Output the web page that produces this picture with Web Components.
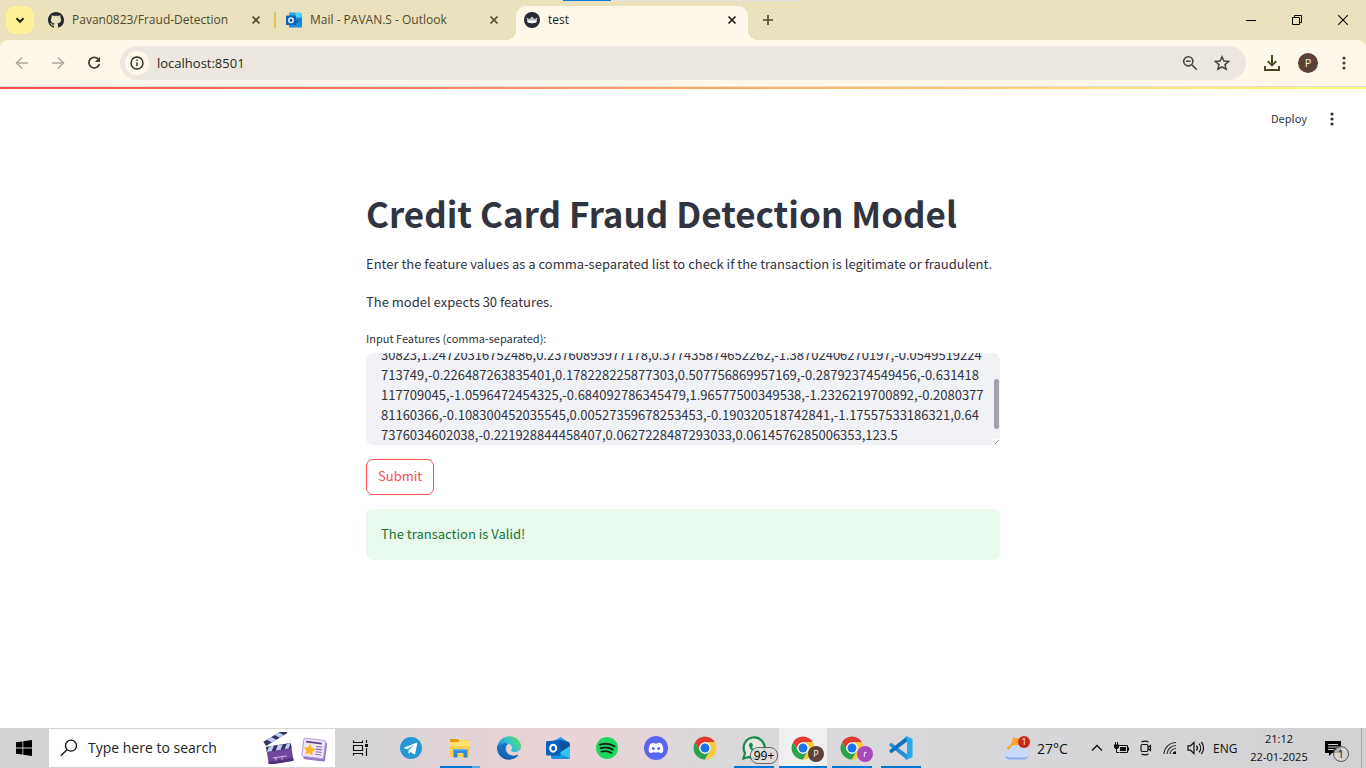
<!DOCTYPE html>
<html lang="en">
<head>
<meta charset="utf-8">
<title>test</title>
<style>
  body { margin: 0; font-family: "Open Sans", "Noto Sans", sans-serif; font-size: 12px; }
</style>
</head>
<body>
<desktop-screen></desktop-screen>
<script>
const CHROME = `<path fill="#e33b2e" d="M4.95 13A22 22 0 0 1 43.05 13H24A11 11 0 0 0 14.47 29.5Z"/><path fill="#2ba24c" d="M4.95 13 14.47 29.5A11 11 0 0 0 33.53 29.5L24 46A22 22 0 0 1 4.95 13Z"/><path fill="#fcc934" d="M43.05 13A22 22 0 0 1 24 46L33.53 29.5A11 11 0 0 0 24 13Z"/><circle cx="24" cy="24" r="11" fill="#fff"/><circle cx="24" cy="24" r="8.6" fill="#1a73e8"/>`;
const OUTLOOK = `<path fill="#0a5fb4" d="M6 4h25v26H6z"/><path fill="#28a8ea" d="M6 1h13v9H6z"/><path fill="#50d9ff" d="M19 1h12v9H19z"/><path fill="#0078d4" d="M6 10h13v9H6z"/><path fill="#28a8ea" d="M19 10h12v9H19z"/><path fill="#1490df" d="M32 14v15a2 2 0 0 1-2 2H6V20l14 2z"/><path fill="#0a4a8f" d="M18 17l4 5 9-5v-4H18z" opacity=".45"/><rect x="0" y="7" width="20" height="19" rx="2" fill="#0a62be"/><ellipse cx="10" cy="16.500" rx="4.400" ry="4.800" fill="none" stroke="#fff" stroke-width="2.800"/>`;
const ICONS = {
  chevron: ['0 0 12 12', `<path d="M2.500 4.300 6 7.800 9.500 4.300" fill="none" stroke="#1f1c0c" stroke-width="2"/>`],
  github: ['0 0 16 16', `<path fill="#24292f" d="M8 0C3.580 0 0 3.580 0 8c0 3.540 2.290 6.530 5.470 7.590.4.070.55-.170.55-.380 0-.190-.010-.820-.010-1.490-2.010.370-2.530-.490-2.690-.940-.090-.230-.480-.940-.820-1.130-.280-.150-.680-.520-.010-.530.630-.010 1.080.580 1.230.820.720 1.210 1.870.870 2.330.660.070-.520.280-.870.510-1.070-1.780-.200-3.640-.890-3.640-3.950 0-.870.310-1.590.820-2.150-.080-.200-.360-1.020.080-2.120 0 0 .670-.210 2.200.820.640-.180 1.320-.270 2-.270s1.360.090 2 .270c1.530-1.040 2.200-.820 2.200-.820.440 1.100.160 1.920.080 2.120.510.560.820 1.270.820 2.150 0 3.070-1.870 3.750-3.650 3.950.290.250.540.730.540 1.480 0 1.070-.010 1.930-.010 2.200 0 .210.150.460.550.380A8 8 0 0 0 16 8c0-4.420-3.580-8-8-8z"/>`],
  outlook: ['0 0 32 32', OUTLOOK],
  crown: ['0 0 16 16', `<circle cx="8" cy="8" r="8" fill="#262730"/><path d="M2.300 5.400 5.300 7.100 8 4.500l2.700 2.600 3-1.700-1.300 4.800Q8 12.200 3.600 10.200z" fill="#b9babd"/><path d="M3.300 8.500h9.400l-.4 1.800Q8 12.200 3.700 10.300z" fill="#fff"/>`],
  close: ['0 0 10 10', `<path d="M1.500 1.500l7 7M8.500 1.500l-7 7" stroke="currentColor" stroke-width="1.700" fill="none"/>`],
  plus: ['0 0 12 12', `<path d="M6 1v10M1 6h10" stroke="#4c462a" stroke-width="1.600"/>`],
  min: ['0 0 10 10', `<path d="M0 5.500h10" stroke="#000"/>`],
  restore: ['0 0 10 10', `<path d="M.5 2.500h7v7h-7zM2.500 2.500v-2h7v7h-2" fill="none" stroke="#000"/>`],
  winclose: ['0 0 10 10', `<path d="M.3.3l9.400 9.400M9.700.3.3 9.700" stroke="#000" stroke-width="1.100"/>`],
  back: ['0 0 14 14', `<path d="M13 7H2M7 1.500 1.500 7 7 12.500" fill="none" stroke="#b0ab98" stroke-width="1.600"/>`],
  forward: ['0 0 14 14', `<path d="M1 7h11M7 1.500 12.500 7 7 12.500" fill="none" stroke="#b0ab98" stroke-width="1.600"/>`],
  reload: ['0 0 14 14', `<path d="M11.600 3.700A5.300 5.300 0 1 0 12.300 8" fill="none" stroke="#48432c" stroke-width="1.800"/><path d="M13 .800V6H7.800z" fill="#48432c"/>`],
  info: ['0 0 14 14', `<circle cx="7" cy="7" r="6" fill="none" stroke="#2d2a20" stroke-width="1.400"/><path d="M7 6.200v4M7 3.500v1.500" stroke="#2d2a20" stroke-width="1.400"/>`],
  zoomout: ['0 0 16 16', `<circle cx="6.300" cy="6.300" r="4.600" fill="none" stroke="#48443a" stroke-width="1.600"/><path d="M9.800 9.800l5 5M4 6.300h4.600" stroke="#48443a" stroke-width="1.600"/>`],
  star: ['0 0 16 16', `<path d="M8 1.800l1.900 4.300 4.700.4-3.600 3.100 1.100 4.600L8 11.800l-4.100 2.400L5 9.600 1.400 6.500l4.700-.4z" fill="none" stroke="#48443a" stroke-width="1.500"/>`],
  download: ['0 0 16 16', `<path d="M8 0v10M3.700 6.200 8 10.500l4.300-4.300M1 11v4h14v-4" fill="none" stroke="#4a4423" stroke-width="1.900"/>`],
  dots: ['0 0 4 14', `<circle cx="2" cy="2" r="1.600" fill="currentColor"/><circle cx="2" cy="7" r="1.600" fill="currentColor"/><circle cx="2" cy="12" r="1.600" fill="currentColor"/>`],
  windows: ['0 0 16 16', `<path d="M0 2.300 6.500 1.400v6.200H0zM7.300 1.300 16 0v7.600H7.300zM0 8.400h6.500v6.200L0 13.700zM7.300 8.400H16V16l-8.700-1.300z"/>`],
  search: ['0 0 18 18', `<circle cx="11" cy="6.700" r="5.500" fill="none" stroke="#111" stroke-width="1.300"/><path d="M7 10.700.8 16.700" stroke="#111" stroke-width="1.300"/>`],
  clapper: ['0 0 32 32', `<g transform="rotate(-9 16 20)"><rect x="4" y="13" width="25" height="18" rx="1" fill="#6c489c"/><path d="M4 28h25v3H4z" fill="#51327e"/><path d="M4 13h25v5H4z" fill="#3a2e62"/><path d="M7 13h5l-3 5H4zM16 13h5l-3 5h-5zM25 13h4l-3 5h-4z" fill="#bccdf5"/><path d="M9 25h14M12 25v3M18 25v3" stroke="#d9a7ea" stroke-width="1.100"/></g><g transform="rotate(-31 3 14)"><rect x="3" y="9" width="25" height="5" fill="#3d3065"/><path d="M7 9h5l3 5h-5zM16 9h5l3 5h-5z" fill="#bccdf5"/></g>`],
  news: ['0 -2 32 32', `<g transform="rotate(7 16 16)"><rect x="5" y="6" width="25" height="22" rx="2" fill="#9a78bf"/><rect x="3" y="4" width="25" height="21" rx="2" fill="#ede6f8" stroke="#b395d5"/><path d="M6 8h18" stroke="#60458a" stroke-width="2"/><path d="M18 12h7M18 15h7M18 18h7M18 21h7" stroke="#8a6cb1" stroke-width="1.300"/><path d="M11 10l2.200 4.200 4.600.7-3.300 3.200.8 4.600-4.300-2.200-4.200 2.200.8-4.600-3.300-3.200 4.600-.7z" fill="#ffb51f"/></g>`],
  taskview: ['0 -2 20 20', `<path d="M1.500.5v2h9v-2M1.500 15.500v-2h9v2M1.500 5.500h9v5h-9zM14.500 0v3M14.500 8v8" fill="none" stroke="#111" stroke-width="1.200"/><path d="M13 4h3v3h-3z" fill="#111"/>`],
  telegram: ['0 0 24 24', `<circle cx="12" cy="12" r="11" fill="#2499d3"/><path d="M4.700 11.800 17.300 6.800c.6-.2 1.100.2.900 1l-2 10c-.1.700-.6.900-1.200.5l-3.300-2.400-1.700 1.600c-.2.200-.6.200-.6-.3L9.700 14l5.900-5.300-7.300 4.500-3.400-1.100z" fill="#fff"/>`],
  folder: ['0 0 24 24', `<path fill="#ffcf4d" d="M2 4h20v17H2z"/><path fill="#dfa000" d="M2 3h8l1.500 1.500L10 6H2z"/><path fill="#ffe073" d="M2 6.500h8.500L12 5h10v5H2z"/><path fill="#3289d8" d="M5.500 13h14v8.500h-4V17h-6v4.500h-4z"/><path fill="#5bb2ef" d="M5.500 13h14v1.500h-14z"/>`],
  edge: ['0 0 24 24', `<defs><linearGradient id="a" x1="0" y1=".7" x2="1" y2=".2"><stop offset="0" stop-color="#1689d8"/><stop offset=".5" stop-color="#31c2d7"/><stop offset="1" stop-color="#65dc50"/></linearGradient><linearGradient id="b" x1="0" y1="0" x2=".8" y2="1"><stop offset="0" stop-color="#1b82d3"/><stop offset="1" stop-color="#0c468f"/></linearGradient></defs><path fill="url(#b)" d="M0 11C1 6 7 5 12 8c-4 0-5 4-3 8s8 5 12.500 2.600C18 24.500 10 25 5 21.500 1 18.500 0 15 0 11z"/><path fill="url(#a)" d="M.3 10.500C1.500 4 7 .2 12.500.2 19 .2 24 5 24 10c0 4-3 6-6.500 6-2.500 0-4-.9-3.200-2.100 1.700-2.200.5-5.900-4.300-6.300C6.500 6.800 2.500 8 .3 10.500z"/><path fill="#176fc1" d="M6 10c-3 6 1 13 8 13 3.500 0 6-1.800 7.500-4.300C15 21.500 9 18 9 13c0-2 .5-4 2-5-2-.2-4 .5-5 2z" opacity=".8"/>`],
  outlooknew: ['0 0 26 26', `<path fill="#1c9be8" d="M7 7l8.500-5L24 7.500V12H7z"/><path fill="#0b4f9d" d="M5 6l11-1 8.500 2.500L16 16H5z"/><path fill="#35c3f3" d="M25 9v13.500a1.500 1.500 0 0 1-1.500 1.500H8l-2-3z"/><path fill="#0f4f9e" d="M14 14l10.500-6.500L25 11l-11 7z"/><path fill="#1b8fe0" d="M6 19h9l10 4.300-1.500.7H8a2 2 0 0 1-2-2z"/><rect x="1" y="6" width="14.500" height="14.500" rx="1.500" fill="#0861ba"/><ellipse cx="8.200" cy="13.200" rx="3" ry="3.500" fill="none" stroke="#fff" stroke-width="2"/>`],
  spotify: ['0 0 24 24', `<circle cx="12" cy="12" r="11" fill="#1ed760"/><path d="M5 8.600c5-1.400 10.400-.8 14.500 1.600M5.700 12.200c4.300-1.200 8.700-.6 12.200 1.400M6.500 15.600c3.500-.9 7-.5 10 1.200" stroke="#102417" stroke-width="1.900" stroke-linecap="round" fill="none"/>`],
  discord: ['0 0 24 24', `<circle cx="12" cy="12" r="12" fill="#5865f2"/><path fill="#fff" d="M8.500 7.200l1-.6.7 1a9 9 0 0 1 3.600 0l.7-1c1.200.2 2.200.6 3 1.100 1.500 2.300 2 5 1.800 8-1 .9-2.100 1.400-3.200 1.600l-.9-1.400a8 8 0 0 1-6.400 0l-.9 1.400c-1.100-.2-2.200-.7-3.200-1.600-.2-3 .3-5.700 1.800-8z"/><circle cx="9.300" cy="12.500" r="1.500" fill="#5865f2"/><circle cx="14.700" cy="12.500" r="1.500" fill="#5865f2"/>`],
  chrome: ['1 1 46 46', CHROME],
  whatsapp: ['0 0 24 24', `<path d="M1.500 22.500 3 17A10.500 10.500 0 1 1 7 21z" fill="#e4eae3" stroke="#178a4c" stroke-width="2.200"/><path d="M8.500 6.500c-2.500 1.800-1.500 5 .8 7.500 2.700 2.900 5.500 4 7.500 2.500 1-.9 1-2 .8-2.300l-2.500-1.300-1.400 1.500c-1.800-.7-3-2-3.700-3.500l1-1.300-1-2.500z" fill="#178a4c"/>`],
  vscode: ['0 0 24 24', `<path fill="#1f8fd6" d="M.5 8.300 2.300 6.800 18 18.500v5.200L.5 9.800z"/><path fill="#0b73bd" d="M.5 15.700l1.800 1.500L18 5.500V.3L.5 14.200z"/><path fill="#29a7ec" d="M17.500.2 23.500 3v18l-6 2.800c-.5.200-.8 0-1-.4L18 18V6L16.500.600z"/>`],
  weather: ['0 0 26 26', `<path d="M2.500 13Q8.500 10 9 2q5 2 8 1v9L6 16z" fill="#f7a428"/><path d="M6 24.500a5 5 0 0 1-.5-10A7 7 0 0 1 18 13a5.800 5.800 0 0 1 1.500 11.500z" fill="#c6dbfb"/><path d="M1.300 20.500C3 22 4.500 22.500 6 22.500h13.500c2.500 0 4-.5 5.300-2.500-.6 2.700-2.800 4.500-5.300 4.500H6c-2.200 0-4.200-1.500-4.700-4z" fill="#85aaf0"/>`],
  up: ['0 0 12 12', `<path d="M1 8.500 6 3.500l5 5" fill="none" stroke="#111" stroke-width="1.300"/>`],
  battery: ['0 0 16 12', `<path d="M5.500 3.500h9v7h-8M14.500 5.500h1v3h-1" fill="none" stroke="#111"/><path d="M7 5h6v4H7zM1 2.500h5v3L4.500 7h-2L1 5.500zM2 0h1v3H2zM4 0h1v3H4z" fill="#111"/><path d="M3.500 7v3.500H6" fill="none" stroke="#111"/>`],
  meet: ['0 0 14 16', `<rect x="2" y="4.500" width="7" height="7" rx="1.500" fill="none" stroke="#111" stroke-width="1.200"/><path d="M9 7.300l2.500-1.600v4.600L9 8.700M2.500 2Q6 .200 9.500 2M2.500 14Q6 15.800 9.500 14" fill="none" stroke="#111" stroke-width="1.200"/>`],
  wifi: ['0 0 14 14', `<path d="M1 13A12 12 0 0 1 13 1.500M4 13A9 9 0 0 1 13 4.500M7 13a6 6 0 0 1 6-5.500" fill="none" stroke="#333" stroke-width="1.200"/><path d="M9.500 13A3.500 3.500 0 0 1 13 10.200V13z" fill="#111"/>`],
  volume: ['0 0 18 14', `<path d="M1 4.800h2.500L7 1.500v11L3.500 9.200H1zM9.500 4.500a4 4 0 0 1 0 5M12 2.700a6.500 6.500 0 0 1 0 8.600M14.300 1a9 9 0 0 1 0 12" fill="none" stroke="#111" stroke-width="1.200"/>`],
  notice: ['0 0 16 16', `<path d="M0 1h16v12H7l-3 3v-3H0z" fill="#000"/><path d="M3 4.500h10M3 7h10M3 9.500h6" stroke="#d5d5d5"/>`]
};

class Base extends HTMLElement {
  constructor() { super(); this.attachShadow({ mode: 'open' }); }
  connectedCallback() { this.shadowRoot.innerHTML = this.render(); this.ready?.(); }
  attr(n, d = '') { return this.getAttribute(n) ?? d; }
}
const icon = (name, w, h = w) => `<ui-icon name="${name}" w="${w}" h="${h}"></ui-icon>`;

customElements.define('ui-icon', class extends Base {
  render() {
    const [box, body] = ICONS[this.attr('name')];
    return `<style>:host{display:block;flex:none}svg{display:block}</style>
      <svg width="${this.attr('w')}" height="${this.attr('h')}" viewBox="${box}" aria-hidden="true">${body}</svg>`;
  }
});

customElements.define('icon-button', class extends Base {
  render() {
    return `<style>
      :host{display:block;flex:none}
      button{all:unset;box-sizing:border-box;width:100%;height:100%;display:flex;align-items:center;justify-content:center}
    </style><button type="button" aria-label="${this.attr('label')}"><slot></slot></button>`;
  }
});

customElements.define('browser-tab', class extends Base {
  render() {
    return `<style>
      :host{display:flex;align-items:center;gap:8px;box-sizing:border-box;flex:0 1 232px;min-width:0;height:28px;padding:0 11px 0 8px;color:#4f4a31;position:relative}
      .name{flex:1;min-width:0;overflow:hidden;white-space:nowrap;line-height:20px}
      icon-button{width:10px;height:16px}
      :host([divided])::after{content:"";position:absolute;right:-4px;top:6px;width:2px;height:16px;background:#d8c762}
      :host([active]){background:#fff8ea;color:#24200f;height:34px;padding-bottom:6px;border-radius:10px 10px 0 0}
      .foot{display:none}
      :host([active]) .foot{display:block;position:absolute;bottom:0;width:10px;height:10px}
      .l{left:-10px;background:radial-gradient(circle at 0 0,transparent 10px,#fff8ea 10px)}
      .r{right:-10px;background:radial-gradient(circle at 100% 0,transparent 10px,#fff8ea 10px)}
    </style>
    <span class="foot l"></span>${icon(this.attr('icon'), 16)}<span class="name"><slot></slot></span>
    <icon-button label="Close tab">${icon('close', 10)}</icon-button><span class="foot r"></span>`;
  }
});

customElements.define('tab-strip', class extends Base {
  render() {
    return `<style>
      :host{display:flex;align-items:flex-start;height:34px;padding-top:6px;background:#eae2bc;position:relative}
      .menu{width:28px;height:28px;margin:0 6px;background:#fff197;border-radius:9px}
      nav{display:flex;gap:6px;flex:0 1 708px;min-width:0}
      .new{width:28px;height:28px;margin-left:6px}
      .controls{display:flex;margin-left:auto}
      .controls icon-button{width:46px;height:28px}
      .peek{position:absolute;top:0;left:563px;width:241px;height:1px;background:linear-gradient(90deg,#0a7bd8 48px,#e2e2e2 48px)}
    </style>
    <span class="peek"></span>
    <icon-button class="menu" label="Search tabs">${icon('chevron', 12)}</icon-button>
    <nav>
      <browser-tab icon="github" divided>Pavan0823/Fraud-Detection</browser-tab>
      <browser-tab icon="outlook">Mail - PAVAN.S - Outlook</browser-tab>
      <browser-tab icon="crown" active>test</browser-tab>
    </nav>
    <icon-button class="new" label="New tab">${icon('plus', 12)}</icon-button>
    <div class="controls">
      <icon-button label="Minimize">${icon('min', 10)}</icon-button>
      <icon-button label="Restore">${icon('restore', 10)}</icon-button>
      <icon-button label="Close">${icon('winclose', 10)}</icon-button>
    </div>`;
  }
});

customElements.define('address-bar', class extends Base {
  render() {
    return `<style>
      :host{display:block;background:#eae2bc}
      .bar{display:flex;align-items:center;height:46px;padding:0 4px;background:#fff8ea;border-bottom:1px solid #dfdedb;border-radius:8px 8px 0 0;color:#4a4423}
      icon-button{width:36px;height:34px}
      .box{display:flex;align-items:center;flex:1;height:34px;margin:0 8px;padding:0 8px 0 5px;background:#ece7e0;border-radius:17px}
      .box icon-button{width:32px}
      .box .info{width:24px;height:24px;border-radius:12px;background:#fff8ea}
      input{all:unset;flex:1;min-width:0;margin-left:8px;font-size:13px;line-height:20px;color:#2b281f}
      .who{width:20px;height:20px;border-radius:10px;background:#5d4037;color:#f3e9e5;font-size:11px;line-height:20px;text-align:center}
    </style>
    <div class="bar">
      <icon-button label="Back">${icon('back', 14)}</icon-button>
      <icon-button label="Forward">${icon('forward', 14)}</icon-button>
      <icon-button label="Reload">${icon('reload', 14)}</icon-button>
      <div class="box">
        <icon-button class="info" label="Site information">${icon('info', 14)}</icon-button>
        <input aria-label="Address" value="localhost:8501">
        <icon-button label="Zoom">${icon('zoomout', 16)}</icon-button>
        <icon-button label="Bookmark">${icon('star', 16)}</icon-button>
      </div>
      <icon-button label="Downloads">${icon('download', 16)}</icon-button>
      <icon-button label="Profile"><span class="who">P</span></icon-button>
      <icon-button label="Menu">${icon('dots', 4, 14)}</icon-button>
    </div>`;
  }
});

customElements.define('feature-form', class extends Base {
  render() {
    return `<style>
      :host{display:block}
      label{display:block;font-size:11px;line-height:20px;margin-bottom:5px}
      .area{position:relative;border-radius:7px;overflow:hidden;background:#f0f2f6}
      textarea{display:block;box-sizing:border-box;width:100%;height:92px;margin:0;padding:14px 15px;border:0;outline:0;background:none;resize:none;overflow:auto;scrollbar-width:none;font:inherit;color:inherit;line-height:20px;white-space:pre}
      .thumb{position:absolute;right:1px;top:26px;width:5px;height:50px;border-radius:3px;background:#a3a4ab}
      .grip{position:absolute;right:1px;bottom:1px;width:5px;height:5px;background:linear-gradient(135deg,#fff 50%,#8b8b90 50%,#8b8b90 65%,#fff 65%)}
      .submit{display:block;margin-top:14px;height:36px;padding:0 11px 2px;border:1px solid #ff4b4b;border-radius:7px;background:#fff;color:#ff4b4b;font:inherit;line-height:20px}
    </style>
    <form onsubmit="return false">
      <label for="f">Input Features (comma-separated):</label>
      <div class="area">
        <textarea id="f" spellcheck="false">1,-0.966271711572087,-0.185226008082898,1.79299333957872,-0.863291275036453,-0.01030887960
30823,1.24720316752486,0.23760893977178,0.377435874652262,-1.38702406270197,-0.0549519224
713749,-0.226487263835401,0.178228225877303,0.507756869957169,-0.28792374549456,-0.631418
117709045,-1.0596472454325,-0.684092786345479,1.96577500349538,-1.2326219700892,-0.2080377
81160366,-0.108300452035545,0.00527359678253453,-0.190320518742841,-1.17557533186321,0.64
7376034602038,-0.221928844458407,0.0627228487293033,0.0614576285006353,123.5</textarea>
        <span class="thumb"></span><span class="grip"></span>
      </div>
      <button class="submit" type="submit">Submit</button>
    </form>`;
  }
  ready() { this.shadowRoot.querySelector('textarea').scrollTop = 42; }
});

customElements.define('status-alert', class extends Base {
  render() {
    return `<style>:host{display:block;padding:14px 15px 16px;background:#e8f9ee;color:#177233;border-radius:7px;line-height:21px}</style><slot></slot>`;
  }
});

customElements.define('app-page', class extends Base {
  render() {
    return `<style>
      :host{display:block;flex:1;background:#fff;color:#31333f;font-family:"Noto Sans CJK SC","Noto Sans",sans-serif;font-size:13px;line-height:23px}
      .accent{height:2px;background:linear-gradient(90deg,#ff4b4b,#ffa465 50%,#fffd80)}
      header{display:flex;justify-content:flex-end;align-items:center;height:60px;padding-right:16px}
      .deploy{all:unset;font-size:11px;line-height:20px;padding-bottom:2px}
      header icon-button{width:36px;height:28px;margin-left:7px}
      main{box-sizing:border-box;max-width:662px;margin:0 auto;padding:40px 14px}
      h1{margin:0;font-size:35px;line-height:48px;font-weight:700}
      p{margin:0 0 15px}
      h1+p{margin-top:15px}
      feature-form{margin-top:14px}
      status-alert{margin-top:14px}
    </style>
    <div class="accent"></div>
    <header><button class="deploy" type="button">Deploy</button><icon-button label="Menu">${icon('dots', 4, 14)}</icon-button></header>
    <main>
      <h1>Credit Card Fraud Detection Model</h1>
      <p>Enter the feature values as a comma-separated list to check if the transaction is legitimate or fraudulent.</p>
      <p>The model expects 30 features.</p>
      <feature-form></feature-form>
      <status-alert role="status">The transaction is Valid!</status-alert>
    </main>`;
  }
});

customElements.define('task-button', class extends Base {
  render() {
    return `<style>
      :host{display:block;position:relative;width:48px;height:40px;flex:none}
      button{all:unset;width:100%;height:100%;display:flex;align-items:center;justify-content:center}
      :host([open])::after{content:"";position:absolute;left:4px;right:4px;bottom:0;height:2px;background:#0078d7}
      :host([more])::after{background:linear-gradient(90deg,#0078d7 32px,#5ba6e0 32px)}
      :host([focused]){background:#f0efef}
      :host([focused])::after{left:0;right:0}
      .badge{position:absolute;right:3px;bottom:6px;width:16px;height:16px;border-radius:8px;font-size:9px;line-height:16px;text-align:center;color:#fff;background:var(--badge,none)}
      .pill{right:0;bottom:4px;width:26px;height:15px;line-height:15px;border:1px solid #666;color:#000;font-size:12px;font-weight:500;background:#dededecc}
    </style>
    <button type="button" aria-label="${this.attr('label')}">${icon(this.attr('icon'), +this.attr('size', 24))}</button>
    ${this.hasAttribute('badge') ? `<span class="badge ${this.attr('kind')}">${this.attr('badge')}</span>` : ''}`;
  }
});

customElements.define('task-bar', class extends Base {
  render() {
    return `<style>
      :host{display:flex;height:40px;font-size:12px;color:#111;background:linear-gradient(90deg,#d3d2d2,#d8d5d6 28%,#e6d3d6 36%,#ead3d6 43%,#dbd8da 51%,#d9d8da 68%,#d1d0d2)}
      .search{display:flex;align-items:center;box-sizing:border-box;width:286px;height:38px;margin:1px 0 1px 1px;padding:0 7px 0 11px;background:#fff}
      input{all:unset;flex:1;min-width:0;margin-left:10px;font-size:14px;line-height:20px}
      input::placeholder{color:#222;opacity:1}
      .pics{display:flex;align-items:center;gap:5px}
      .apps{display:flex;gap:1px;margin-left:3px}
      .tray{display:flex;align-items:center;margin-left:auto;white-space:nowrap}
      .weather{position:relative;margin-right:7px}
      .weather b{position:absolute;right:0;top:1px;width:12px;height:12px;border-radius:6px;background:#c8281d;color:#fff;font-size:9px;line-height:12px;text-align:center;font-weight:400}
      .temp{font-size:14px;width:54px}
      .lang{width:24px;margin:0 12px 0 8px}
      time{display:block;width:60px;text-align:center;font-size:11px;line-height:18px}
      .note{position:relative;margin:0 20px 0 16px}
      .note b{position:absolute;left:8px;top:6px;width:14px;height:14px;border:1px solid #555;border-radius:8px;font-size:11px;line-height:14px;text-align:center;font-weight:400;background:#d4d4d4cc}
      .edge{width:4px;height:40px;border-left:1px solid #a9a9a9}
      .sys{display:flex;align-items:center;gap:10px}
    </style>
    <task-button icon="windows" size="16" label="Start"></task-button>
    <div class="search">${icon('search', 18)}<input aria-label="Search" placeholder="Type here to search"><span class="pics">${icon('clapper', 32)}${icon('news', 28)}</span></div>
    <div class="apps">
      <task-button icon="taskview" size="20" label="Task View"></task-button>
      <task-button icon="telegram" label="Telegram"></task-button>
      <task-button icon="folder" label="File Explorer" open more></task-button>
      <task-button icon="edge" label="Edge"></task-button>
      <task-button icon="outlooknew" size="26" label="Outlook"></task-button>
      <task-button icon="spotify" label="Spotify"></task-button>
      <task-button icon="discord" label="Discord"></task-button>
      <task-button icon="chrome" label="Chrome"></task-button>
      <task-button icon="whatsapp" label="WhatsApp" badge="99+" kind="pill" open></task-button>
      <task-button icon="chrome" label="Chrome P" badge="P" style="--badge:#5d4037" open focused></task-button>
      <task-button icon="chrome" label="Chrome r" badge="r" style="--badge:#ab47bc" open></task-button>
      <task-button icon="vscode" label="Visual Studio Code" open></task-button>
    </div>
    <div class="tray">
      <span class="weather">${icon('weather', 26)}<b>1</b></span><span class="temp">27°C</span>
      <span class="sys">${icon('up', 12)}${icon('battery', 16, 12)}${icon('meet', 14, 16)}${icon('wifi', 14)}${icon('volume', 18, 14)}</span>
      <span class="lang">ENG</span>
      <time datetime="2025-01-22T21:12">21:12<br>22-01-2025</time>
      <span class="note">${icon('notice', 16)}<b>1</b></span>
      <span class="edge"></span>
    </div>`;
  }
});

customElements.define('desktop-screen', class extends Base {
  render() {
    return `<style>:host{display:flex;flex-direction:column;min-height:100vh}</style>
      <tab-strip></tab-strip><address-bar></address-bar><app-page></app-page><task-bar></task-bar>`;
  }
});
</script>
</body>
</html>
